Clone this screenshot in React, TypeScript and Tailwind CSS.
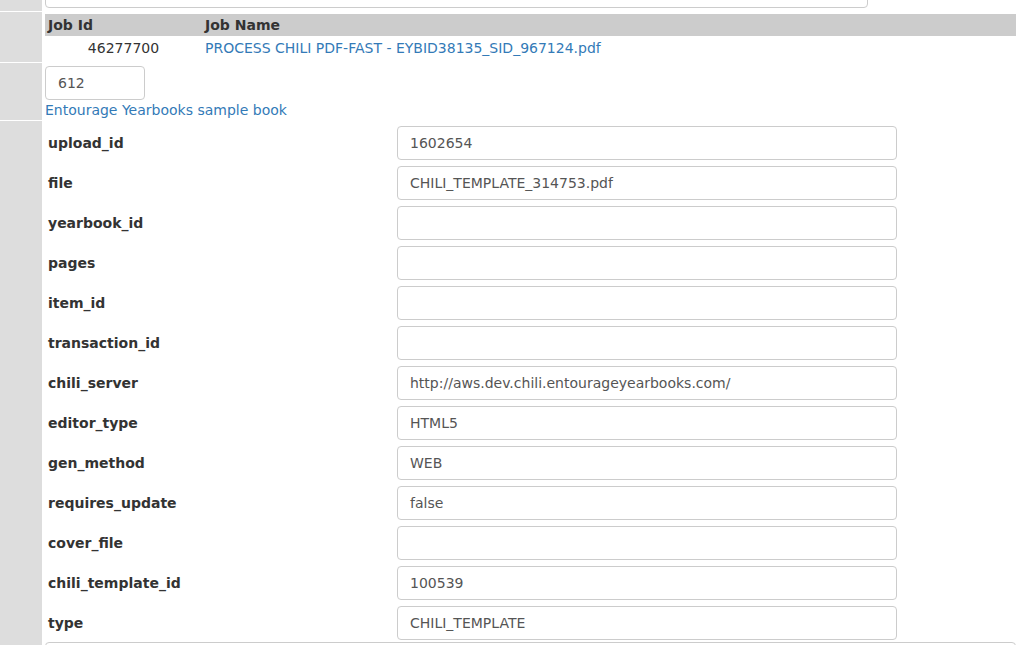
import React from "react";

const fields: [string, string][] = [
  ["upload_id", "1602654"],
  ["file", "CHILI_TEMPLATE_314753.pdf"],
  ["yearbook_id", ""],
  ["pages", ""],
  ["item_id", ""],
  ["transaction_id", ""],
  ["chili_server", "http://aws.dev.chili.entourageyearbooks.com/"],
  ["editor_type", "HTML5"],
  ["gen_method", "WEB"],
  ["requires_update", "false"],
  ["cover_file", ""],
  ["chili_template_id", "100539"],
  ["type", "CHILI_TEMPLATE"],
];

function Row({ children, className = "" }: { children: React.ReactNode; className?: string }) {
  return (
    <div className={"flex shrink-0 " + className}>
      <div className="w-[42px] shrink-0 bg-[#dddddd]" />
      <div className="ml-[3px] flex-1 min-w-0">{children}</div>
    </div>
  );
}

export default function App() {
  return (
    <div
      className="w-[1016px] h-[645px] overflow-hidden bg-white text-[14px] text-[#333333] flex flex-col gap-px"
      style={{ fontFamily: '"DejaVu Sans", Verdana, sans-serif' }}
    >
      <Row className="h-[11px] overflow-hidden">
        <div className="relative h-[11px]">
          <div className="absolute left-0 bottom-[3px] w-[823px] h-[34px] border border-[#cccccc] rounded-[4px]" />
        </div>
      </Row>
      <Row className="h-[50px]">
        <div className="pt-[2px]">
          <div className="flex h-[22px] items-center bg-[#cccccc] font-bold">
            <div className="w-[157px] px-[3px]">Job Id</div>
            <div className="px-[3px]">Job Name</div>
          </div>
          <div className="flex h-[24px] items-center">
            <div className="w-[157px] px-[3px] text-center">46277700</div>
            <div className="px-[3px] text-[#337ab7] whitespace-nowrap">PROCESS CHILI PDF-FAST - EYBID38135_SID_967124.pdf</div>
          </div>
        </div>
      </Row>
      <Row className="h-[57px]">
        <div className="pt-[3px]">
          <div className="w-[100px] h-[34px] border border-[#cccccc] rounded-[4px] px-[12px] flex items-center text-[#555555]">
            612
          </div>
          <div className="text-[#337ab7] leading-[18px] mt-px">Entourage Yearbooks sample book</div>
        </div>
      </Row>
      <Row className="flex-1">
        <div className="flex flex-col">
          {fields.map(([label, value]) => (
            <div key={label} className="flex h-[40px] pt-[5px] shrink-0">
              <div className="w-[352px] px-[3px] font-bold flex items-center h-[34px]">{label}</div>
              <div className="w-[500px] h-[34px] border border-[#cccccc] rounded-[4px] px-[12px] flex items-center text-[#555555] whitespace-nowrap">
                {value}
              </div>
            </div>
          ))}
          <div className="mt-px h-[40px] shrink-0 border border-[#cccccc] rounded-[4px]" />
        </div>
      </Row>
    </div>
  );
}
